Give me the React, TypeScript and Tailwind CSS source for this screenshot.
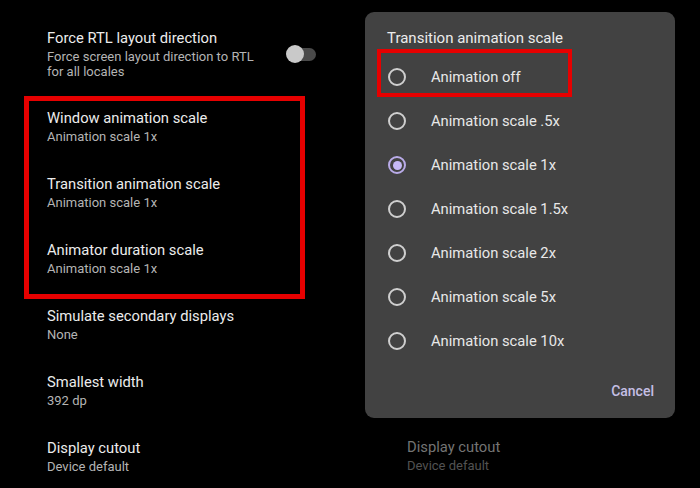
import React from "react";

type Setting = { title: string; summary: string[] };

const topSetting: Setting = {
  title: "Force RTL layout direction",
  summary: ["Force screen layout direction to RTL", "for all locales"],
};

const animationSettings: Setting[] = [
  { title: "Window animation scale", summary: ["Animation scale 1x"] },
  { title: "Transition animation scale", summary: ["Animation scale 1x"] },
  { title: "Animator duration scale", summary: ["Animation scale 1x"] },
];

const moreSettings: Setting[] = [
  { title: "Simulate secondary displays", summary: ["None"] },
  { title: "Smallest width", summary: ["392 dp"] },
  { title: "Display cutout", summary: ["Device default"] },
];

const scaleOptions = [
  "Animation off",
  "Animation scale .5x",
  "Animation scale 1x",
  "Animation scale 1.5x",
  "Animation scale 2x",
  "Animation scale 5x",
  "Animation scale 10x",
];

function SettingText({ s }: { s: Setting }) {
  return (
    <div className="flex flex-col">
      <div className="text-[14.75px] leading-[20px] text-[#ececec]">{s.title}</div>
      <div className="mt-[1px] text-[13px] leading-[15px] text-[#b4b4b4]">
        {s.summary.map((line) => (
          <div key={line}>{line}</div>
        ))}
      </div>
    </div>
  );
}

function SettingRow({ s }: { s: Setting }) {
  return (
    <div className="py-[15px] pl-[47px]">
      <SettingText s={s} />
    </div>
  );
}

function Toggle() {
  return (
    <div className="relative h-[18px] w-[30px]">
      <div className="absolute left-[9px] top-[3px] h-[13px] w-[21px] rounded-full bg-[#4a4a4a]" />
      <div className="absolute left-0 top-0 h-[18px] w-[18px] rounded-full bg-[#c9c9c9]" />
    </div>
  );
}

function Radio({ checked }: { checked: boolean }) {
  if (checked) {
    return (
      <div className="flex h-[18px] w-[18px] items-center justify-center rounded-full border-2 border-[#b9abe8]">
        <div className="h-[9px] w-[9px] rounded-full bg-[#c6b9f6]" />
      </div>
    );
  }
  return <div className="h-[18px] w-[18px] rounded-full border-2 border-[#cfcfcf]" />;
}

function ScaleDialog() {
  return (
    <div className="relative ml-[15px] mt-[12px] flex h-[406px] w-[310px] flex-col rounded-[9px] bg-[#424242]">
      <div className="pl-[22px] pt-[16px] text-[15px] leading-[20px] text-[#ececec]">
        Transition animation scale
      </div>
      <div className="mt-[7px] flex flex-col">
        {scaleOptions.map((opt, i) => (
          <div key={opt} className="flex h-[44px] items-center pl-[23px]">
            <Radio checked={i === 2} />
            <span className="ml-[25px] text-[14.75px] text-[#e8e8e8]">{opt}</span>
          </div>
        ))}
      </div>
      <div className="mt-auto flex justify-end pb-[17px] pr-[21px]">
        <span className="text-[14px] font-medium leading-[20px] text-[#c5bfe4]">Cancel</span>
      </div>
      {/* highlight around the first option */}
      <div className="pointer-events-none absolute left-[12px] top-[37px] h-[48px] w-[195px] border-4 border-[#e60000]" />
    </div>
  );
}

export default function App() {
  return (
    <div
      className="flex h-[488px] w-[700px] overflow-hidden bg-black"
      style={{ fontFamily: "Roboto, 'Noto Sans', sans-serif" }}
    >
      {/* settings list */}
      <div className="flex w-[350px] flex-col pt-[13px]">
        <div className="flex items-center pb-[14px] pl-[47px] pt-[15px] pr-[34px]">
          <SettingText s={topSetting} />
          <div className="ml-auto">
            <Toggle />
          </div>
        </div>
        <div className="relative">
          {animationSettings.map((s) => (
            <SettingRow key={s.title} s={s} />
          ))}
          <div className="pointer-events-none absolute left-[24px] top-[3px] h-[203px] w-[281px] border-[5px] border-[#e60000]" />
        </div>
        {moreSettings.map((s) => (
          <SettingRow key={s.title} s={s} />
        ))}
      </div>

      {/* dialog over the dimmed list */}
      <div className="flex w-[350px] flex-col">
        <ScaleDialog />
        <div className="mt-[19px] pl-[57px]">
          <div className="text-[14.75px] leading-[20px] text-[#747474]">Display cutout</div>
          <div className="mt-[1px] text-[13px] leading-[15px] text-[#525252]">Device default</div>
        </div>
      </div>
    </div>
  );
}
